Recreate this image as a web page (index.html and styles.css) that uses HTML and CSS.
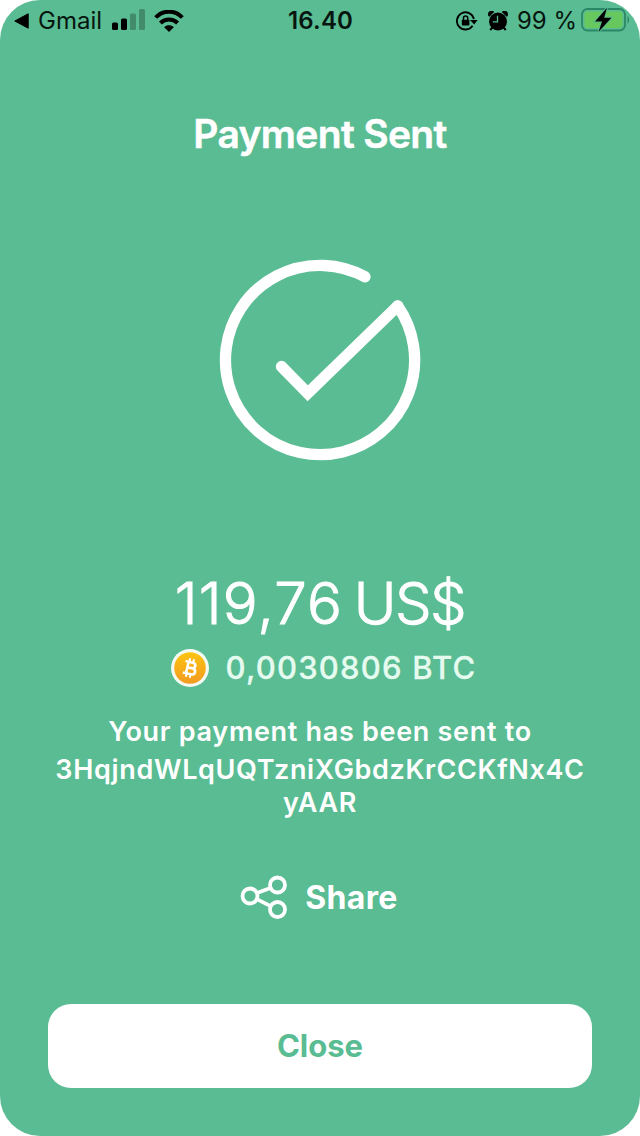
FILE: index.html
```html
<!DOCTYPE html>
<html lang="en">
<head>
<meta charset="utf-8">
<title>Payment Sent</title>
<link rel="stylesheet" href="styles.css">
</head>
<body>
<main class="screen">
  <header class="status">
    <div class="status-left">
      <svg class="back" width="16" height="16" viewBox="0 0 16 16"><path d="M.8 8 14.2.8v14.4Z" stroke="#000" stroke-width="1" stroke-linejoin="round"/></svg>
      <span class="app">Gmail</span>
      <svg class="signal" width="34" height="22" viewBox="0 0 34 22"><rect x="0" y="13.5" width="6" height="7.5" rx="1.5"/><rect x="9" y="9.5" width="6" height="11.5" rx="1.5"/><g opacity=".25"><rect x="18" y="4.5" width="6" height="16.5" rx="1.5"/><rect x="27" y="0" width="6" height="21" rx="1.5"/></g></svg>
      <svg class="wifi" width="30" height="22" viewBox="0 0 30 22"><g fill="none" stroke="#000" stroke-width="4"><path d="M1.7 7.5C9-.3 21-.3 28.3 7.5"/><path d="M6.4 13C11.2 8.200 18.8 8.200 23.6 13"/></g><path d="M10.2 17.200c2.8-2.5 6.800-2.500 9.600 0L15 22Z"/></svg>
    </div>
    <time class="clock">16.40</time>
    <div class="status-right">
      <svg class="lock" width="22" height="20" viewBox="0 0 22 20"><path d="M16.600 14.800A8.600 8.600 0 1 1 17.900 8" fill="none" stroke="#000" stroke-width="1.800"/><path d="M14 9h7.600l-3.400 4.600Z"/><rect x="5.800" y="8.800" width="7.600" height="5.800" rx=".8"/><path d="M7.500 9V7.200a2.100 2.100 0 0 1 4.200 0V9" fill="none" stroke="#000" stroke-width="1.500"/></svg>
      <svg class="alarm" width="20" height="20" viewBox="0 0 20 20"><circle cx="10" cy="10.500" r="9"/><path d="M1.200 5.500A3.200 3.200 0 0 1 5.900.9ZM18.800 5.500A3.200 3.200 0 0 0 14.100.9Z" stroke="#000" stroke-width=".6"/><path d="m4.500 16.500-2.300 2.500m13.300-2.500 2.300 2.500" stroke="#000" stroke-width="2"/><path d="M9.500 4.800v6H4.800" fill="none" stroke="#59bc92" stroke-width="1.300"/></svg>
      <span class="percent">99 %</span>
      <svg class="battery" width="50" height="26" viewBox="0 0 50 26"><rect x="1" y="2" width="43" height="21.500" rx="5.500" fill="none" stroke="#2c8765" stroke-width="1.800"/><rect x="3.500" y="4.500" width="38" height="16.500" rx="3.500" fill="#67c85e"/><path d="M46.500 9v7.500c2-1.200 2-6.300 0-7.500Z" fill="#2c8765"/><path d="M26 .8 14 14.600h7L17.500 25 30.500 10.800h-7.300Z" stroke="#59bc92" stroke-width="2" paint-order="stroke"/></svg>
    </div>
  </header>

  <h1 class="title">Payment Sent</h1>

  <svg class="check" width="204" height="204" viewBox="218 258 204 204"><g fill="none" stroke="#fff" stroke-width="11.300" stroke-linecap="round"><path d="M365 276.800A94.600 94.600 0 1 0 397.700 306"/><path d="M281.500 366.500 307.700 393.200 397.700 306"/></g></svg>

  <div class="amount"><span class="value">119,76</span> US$</div>
  <div class="crypto">
    <svg class="coin" width="40" height="40" viewBox="0 0 40 40"><defs><linearGradient id="gold" x1="0" y1="0" x2="0" y2="1"><stop offset="0" stop-color="#fcc40f"/><stop offset="1" stop-color="#f39a22"/></linearGradient></defs><circle cx="20" cy="20" r="19" fill="#f3faf1"/><circle cx="20" cy="20" r="15.800" fill="url(#gold)"/><g transform="rotate(13 20 20)" fill="none" stroke="#fff" stroke-width="2.600"><path d="M14 14.200h7.500c4.300 0 4.300 5.600 0 5.600h-4.500 5.200c4.800 0 4.800 6.200 0 6.200H14M17.300 14v12"/><path d="M18 10.500V14m4-3.500V14m-4 12v3.500m4-3.500v3.500" stroke-width="2"/></g></svg>
    <span class="btc">0,0030806 BTC</span>
  </div>
  <p class="message">Your payment has been sent to</p>
  <p class="address">3HqjndWLqUQTzniXGbdzKrCCKfNx4C<br>yAAR</p>

  <a class="share">
    <svg width="48" height="44" viewBox="0 0 48 44"><g fill="none" stroke="#fff" stroke-width="3.800"><circle cx="10" cy="21" r="7.500"/><circle cx="37.500" cy="10" r="7.500"/><circle cx="37.500" cy="34.500" r="7.500"/><path d="m17 18.100 13.400-5.200M16.800 24.100l13.800 7"/></g></svg>
    <span>Share</span>
  </a>

  <button class="close">Close</button>
</main>
</body>
</html>
```
FILE: styles.css
```css
* { box-sizing: border-box; }
body { margin: 0; background: #fff; font-family: Inter, "Liberation Sans", sans-serif; }
.screen {
  height: 1136px;
  background: #59bc92;
  border-radius: 40px;
  color: #fff;
  display: flex;
  flex-direction: column;
  align-items: center;
  overflow: hidden;
}
svg { display: block; flex: none; }
.status {
  width: 100%;
  height: 41px;
  padding: 1px 9px 0 14px;
  display: grid;
  grid-template-columns: 1fr auto 1fr;
  align-items: center;
  color: #07160f;
  font-size: 24px;
  line-height: 40px;
  white-space: nowrap;
}
.status-left, .status-right { display: flex; align-items: center; }
.status-right { justify-content: flex-end; }
.app { margin-left: 8px; letter-spacing: 0; }
.signal { margin-left: 10px; margin-top: -2px; }
.wifi { margin-left: 8px; margin-top: -1px; }
.clock { font-weight: 600; letter-spacing: .2px; margin-right: 4px; }
.alarm { margin-left: 10px; }
.percent { margin-left: 9px; }
.battery { margin-left: 4px; margin-top: -2px; }
.title { margin: 68px 0 0; font-size: 39px; line-height: 50px; font-weight: 600; letter-spacing: -.65px; -webkit-text-stroke: .5px #fff; }
.check { margin-top: 99px; }
.amount { margin-top: 106px; font-size: 58px; line-height: 70px; font-weight: 300; letter-spacing: -1.5px; word-spacing: -4px; white-space: nowrap; -webkit-text-stroke: 1px #fff; }
.value { letter-spacing: 1.2px; }
.crypto { margin-top: 10px; height: 40px; display: flex; align-items: center; gap: 16px; margin-left: 6px; }
.btc { font-size: 31px; line-height: 40px; font-weight: 500; letter-spacing: 1.2px; color: #e6fbf0; white-space: nowrap; -webkit-text-stroke: .3px #e6fbf0; }
.message, .address { margin: 0; font-size: 27px; font-weight: 600; text-align: center; white-space: nowrap; }
.message { margin-top: 26px; line-height: 36px; letter-spacing: .7px; }
.address { margin-top: 3px; line-height: 33px; letter-spacing: .65px; }
.share { margin-top: 56px; margin-right: 2px; height: 44px; display: flex; align-items: center; gap: 17px; font-size: 32px; font-weight: 700; letter-spacing: .3px; }
.close {
  margin-top: 85px;
  width: 544px;
  height: 84px;
  padding: 0 0 2px;
  border: 0;
  border-radius: 23px;
  background: #fff;
  color: #59bc92;
  font: 700 31px Inter, sans-serif;
}
```
